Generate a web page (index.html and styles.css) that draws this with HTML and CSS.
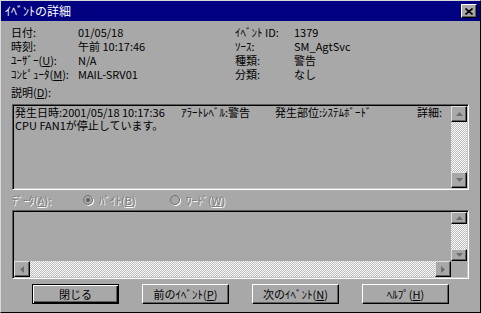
FILE: index.html
```html
<!DOCTYPE html>
<html lang="ja">
<head>
    <meta charset="UTF-8">
    <title>ｲﾍﾞﾝﾄの詳細</title>
    <link rel="stylesheet" href="styles.css">
</head>
<body>
<div class="window">
    <div class="titlebar">
        <span class="title">ｲﾍﾞﾝﾄの詳細</span>
        <div class="close-btn">
            <svg width="8" height="7" viewBox="0 0 8 7"><path d="M0.5 0.5 L7.5 6.5 M7.5 0.5 L0.5 6.5" stroke="#000" stroke-width="1.6"/></svg>
        </div>
    </div>

    <div class="content">
        <div class="info">
            <span>日付:</span><span>01/05/18</span><span>ｲﾍﾞﾝﾄ ID:</span><span>1379</span>
            <span>時刻:</span><span>午前 10:17:46</span><span>ｿｰｽ:</span><span>SM_AgtSvc</span>
            <span>ﾕｰｻﾞｰ(<u>U</u>):</span><span>N/A</span><span>種類:</span><span>警告</span>
            <span>ｺﾝﾋﾟｭｰﾀ(<u>M</u>):</span><span>MAIL-SRV01</span><span>分類:</span><span>なし</span>
        </div>

        <div class="caption">説明(<u>D</u>):</div>
        <div class="sunken desc">
            <div class="desc-text">
                <div class="desc-line"><span class="seg seg1">発生日時:2001/05/18 10:17:36</span><span class="seg seg2">ｱﾗｰﾄﾚﾍﾞﾙ:警告</span><span class="seg seg3">発生部位:ｼｽﾃﾑﾎﾞｰﾄﾞ</span><span class="seg">詳細:</span></div>
                <div class="desc-line">CPU FAN1が停止しています。</div>
            </div>
            <div class="vscroll">
                <div class="sb-btn tall"><svg width="7" height="4" viewBox="0 0 7 4"><path d="M3.5 0 L7 4 L0 4 Z" fill="#6e6e6e"/></svg></div>
                <div class="sb-track"></div>
                <div class="sb-btn tall"><svg width="7" height="4" viewBox="0 0 7 4"><path d="M0 0 L7 0 L3.5 4 Z" fill="#6e6e6e"/></svg></div>
            </div>
        </div>

        <div class="data-row">
            <span class="data-label disabled">ﾃﾞｰﾀ(<u>A</u>):</span>
            <span class="radio-opt opt1"><span class="radio checked"></span><span class="disabled">ﾊﾞｲﾄ(<u>B</u>)</span></span>
            <span class="radio-opt"><span class="radio"></span><span class="disabled">ﾜｰﾄﾞ(<u>W</u>)</span></span>
        </div>
        <div class="sunken data">
            <div class="data-main">
                <div class="data-area"></div>
                <div class="vscroll">
                    <div class="sb-btn short"><svg width="7" height="4" viewBox="0 0 7 4"><path d="M3.5 0 L7 4 L0 4 Z" fill="#6e6e6e"/></svg></div>
                    <div class="sb-track"></div>
                    <div class="sb-btn short"><svg width="7" height="4" viewBox="0 0 7 4"><path d="M0 0 L7 0 L3.5 4 Z" fill="#6e6e6e"/></svg></div>
                </div>
            </div>
            <div class="hscroll-row">
                <div class="sb-btn wide"><svg width="4" height="7" viewBox="0 0 4 7"><path d="M0 3.5 L4 0 L4 7 Z" fill="#6e6e6e"/></svg></div>
                <div class="sb-track"></div>
                <div class="sb-btn wide"><svg width="4" height="7" viewBox="0 0 4 7"><path d="M0 0 L4 3.5 L0 7 Z" fill="#6e6e6e"/></svg></div>
                <div class="corner"></div>
            </div>
        </div>

        <div class="buttons">
            <button class="btn default">閉じる</button>
            <button class="btn">前のｲﾍﾞﾝﾄ(<u>P</u>)</button>
            <button class="btn">次のｲﾍﾞﾝﾄ(<u>N</u>)</button>
            <button class="btn">ﾍﾙﾌﾟ(<u>H</u>)</button>
        </div>
    </div>
</div>
</body>
</html>
```

FILE: styles.css
```css
body {
    margin: 0;
    padding: 0;
    background-color: #a8a8a8;
    font-family: "Noto Sans CJK JP", sans-serif;
    font-size: 11px;
    color: #000;
}

u {
    text-underline-offset: 1px;
}

.window {
    width: 481px;
    height: 313px;
    box-sizing: border-box;
    background-color: #a8a8a8;
    border: 1px solid;
    border-color: #d8d8d8 #000 #000 #d8d8d8;
    display: flex;
    flex-direction: column;
}

.titlebar {
    height: 20px;
    background-color: #000080;
    display: flex;
    align-items: center;
    justify-content: space-between;
    padding: 0 3px 0 4px;
}
.title {
    color: #fff;
    font-size: 12px;
    line-height: 20px;
}
.close-btn {
    width: 14px;
    height: 12px;
    background-color: #a8a8a8;
    border: 1px solid;
    border-color: #fff #000 #000 #fff;
    box-shadow: inset -1px -1px #606060;
    display: flex;
    align-items: center;
    justify-content: center;
}

.content {
    padding: 4px 11px 0 11px;
    display: flex;
    flex-direction: column;
}

/* event header info */
.info {
    display: grid;
    grid-template-columns: 67px 157px 59px 1fr;
    grid-auto-rows: 14px;
    line-height: 14px;
    margin-left: -1px;
}

.caption {
    line-height: 14px;
    margin-top: 4px;
    margin-left: -1px;
}

.sunken {
    box-sizing: border-box;
    border: 1px solid;
    border-color: #5a5a5a #fff #fff #5a5a5a;
    box-shadow: inset 1px 1px #000, inset -1px -1px #c4c4c4;
    padding: 1px;
}

.desc {
    margin-top: 5px;
    height: 86px;
    display: flex;
}
.desc-text {
    flex: 1;
    padding-left: 1px;
    white-space: nowrap;
    overflow: hidden;
}
.desc-line {
    height: 13px;
    line-height: 12px;
}
.seg {
    display: inline-block;
}
.seg1 { width: 166px; }
.seg2 { width: 94px; }
.seg3 { width: 142px; }

/* scrollbars */
.vscroll {
    width: 16px;
    display: flex;
    flex-direction: column;
}
.sb-btn {
    box-sizing: border-box;
    background-color: #a8a8a8;
    border: 1px solid;
    border-color: #e0e0e0 #000 #000 #e0e0e0;
    box-shadow: inset -1px -1px #606060;
    display: flex;
    align-items: center;
    justify-content: center;
    flex-shrink: 0;
}
.sb-btn.tall { height: 16px; }
.sb-btn.short { height: 12px; }
.sb-btn.wide { width: 16px; }
.sb-track {
    flex: 1;
    background: repeating-conic-gradient(#ffffff 0 25%, #b8b8b8 0 50%) 0 0 / 2px 2px;
}

.data-row {
    display: flex;
    align-items: center;
    line-height: 14px;
    margin-top: 3px;
}
.disabled {
    color: #7c7c7c;
    text-shadow: 1px 1px #fff;
}
.data-label {
    width: 71px;
}
.radio-opt {
    display: flex;
    align-items: center;
    gap: 6px;
}
.opt1 {
    width: 87px;
}
.radio {
    width: 10px;
    height: 10px;
    box-sizing: border-box;
    border-radius: 50%;
    border: 1px solid #707070;
    box-shadow: 1px 1px #fff;
    position: relative;
}
.radio.checked::after {
    content: "";
    position: absolute;
    left: 2px;
    top: 2px;
    width: 4px;
    height: 4px;
    border-radius: 50%;
    background-color: #606060;
}

.data {
    margin-top: 3px;
    height: 69px;
    display: flex;
    flex-direction: column;
}
.data-main {
    flex: 1;
    display: flex;
}
.data-area {
    flex: 1;
}
.hscroll-row {
    height: 16px;
    display: flex;
}
.corner {
    width: 16px;
    background-color: #a8a8a8;
}

/* bottom buttons */
.buttons {
    display: flex;
    justify-content: center;
    gap: 23px;
    margin-top: 5px;
}
.btn {
    width: 87px;
    height: 20px;
    box-sizing: border-box;
    padding: 0;
    font-family: "Noto Sans CJK JP", sans-serif;
    font-size: 11px;
    color: #000;
    background-color: #a8a8a8;
    border: 1px solid;
    border-color: #fff #000 #000 #fff;
    box-shadow: inset -1px -1px #606060;
}
.btn.default {
    border: 1px solid #000;
    box-shadow: inset 1px 1px #fff, inset -1px -1px #000, inset -2px -2px #606060;
}
```
